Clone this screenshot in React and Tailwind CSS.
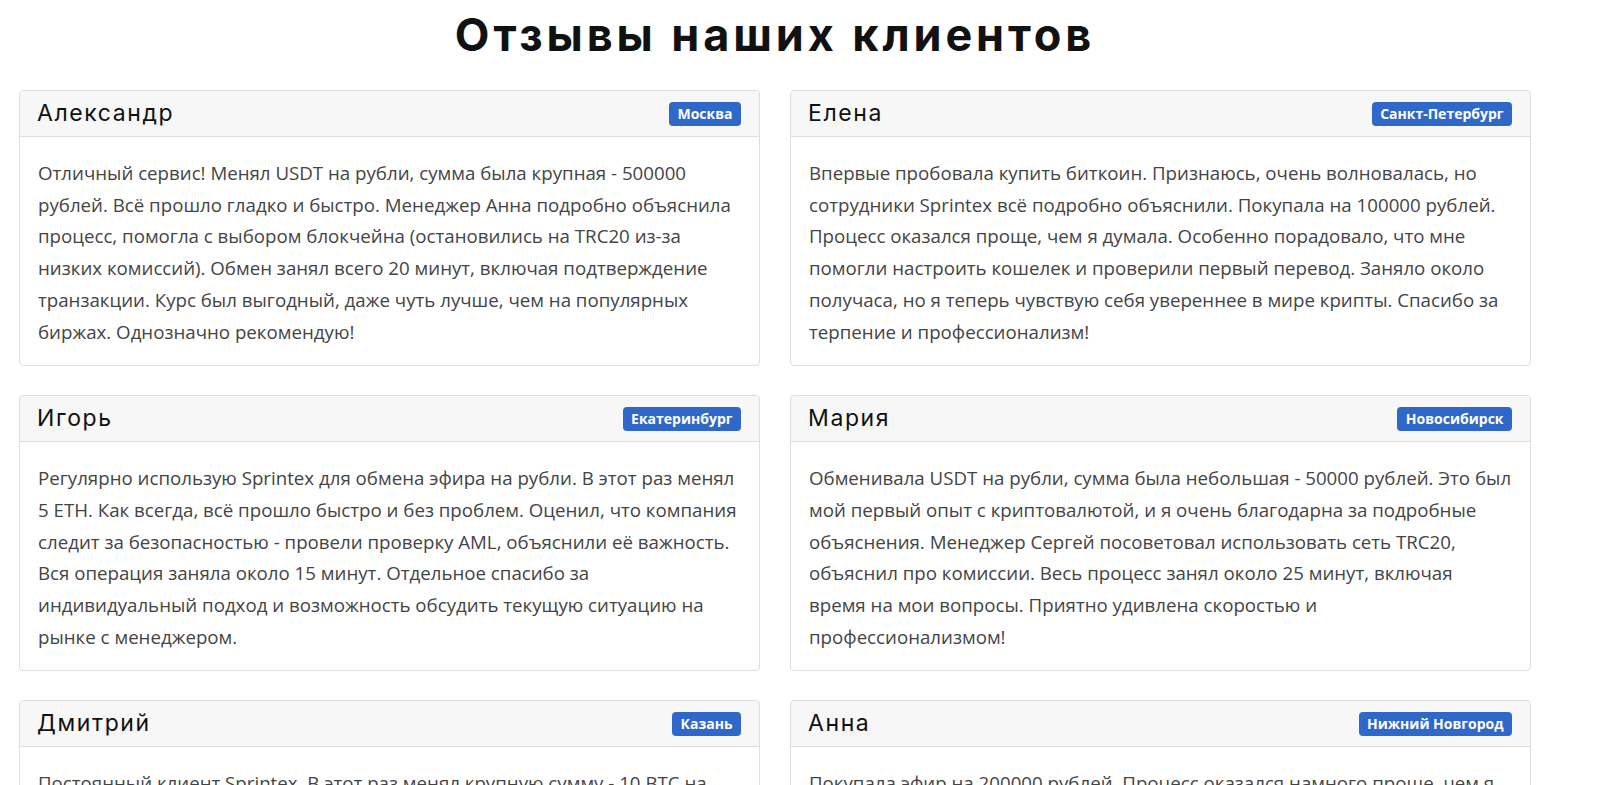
const reviews = [
  {
    name: "Александр",
    city: "Москва",
    text: "Отличный сервис! Менял USDT на рубли, сумма была крупная - 500000 рублей. Всё прошло гладко и быстро. Менеджер Анна подробно объяснила процесс, помогла с выбором блокчейна (остановились на TRC20 из-за низких комиссий). Обмен занял всего 20 минут, включая подтверждение транзакции. Курс был выгодный, даже чуть лучше, чем на популярных биржах. Однозначно рекомендую!",
  },
  {
    name: "Елена",
    city: "Санкт-Петербург",
    text: "Впервые пробовала купить биткоин. Признаюсь, очень волновалась, но сотрудники Sprintex всё подробно объяснили. Покупала на 100000 рублей. Процесс оказался проще, чем я думала. Особенно порадовало, что мне помогли настроить кошелек и проверили первый перевод. Заняло около получаса, но я теперь чувствую себя увереннее в мире крипты. Спасибо за терпение и профессионализм!",
  },
  {
    name: "Игорь",
    city: "Екатеринбург",
    text: "Регулярно использую Sprintex для обмена эфира на рубли. В этот раз менял 5 ETH. Как всегда, всё прошло быстро и без проблем. Оценил, что компания следит за безопасностью - провели проверку AML, объяснили её важность. Вся операция заняла около 15 минут. Отдельное спасибо за индивидуальный подход и возможность обсудить текущую ситуацию на рынке с менеджером.",
  },
  {
    name: "Мария",
    city: "Новосибирск",
    text: "Обменивала USDT на рубли, сумма была небольшая - 50000 рублей. Это был мой первый опыт с криптовалютой, и я очень благодарна за подробные объяснения. Менеджер Сергей посоветовал использовать сеть TRC20, объяснил про комиссии. Весь процесс занял около 25 минут, включая время на мои вопросы. Приятно удивлена скоростью и профессионализмом!",
  },
  {
    name: "Дмитрий",
    city: "Казань",
    text: "Постоянный клиент Sprintex. В этот раз менял крупную сумму - 10 BTC на рубли. Всё прошло чётко и по договорённости, курс зафиксировали заранее. Менеджер был на связи на каждом этапе сделки, средства поступили на счёт в течение часа. Рекомендую всем, кто ценит надёжность и своё время.",
  },
  {
    name: "Анна",
    city: "Нижний Новгород",
    text: "Покупала эфир на 200000 рублей. Процесс оказался намного проще, чем я ожидала. Менеджер помог выбрать удобный способ оплаты и всё подробно рассказал о безопасном хранении. Через 30 минут монеты уже были на моём кошельке. Обязательно обращусь ещё раз!",
  },
];

function ReviewCard({ name, city, text }) {
  return (
    <div className="rounded-[4px] border border-[#dedede] bg-white">
      <div className="flex h-[46px] items-center justify-between rounded-t-[4px] border-b border-[#dedede] bg-[#f7f7f7] pl-[17px] pr-[18px]">
        <h3 className="text-[23px] leading-none tracking-[1.6px] text-[#111]" style={{ fontFamily: "Inter, sans-serif" }}>
          {name}
        </h3>
        <span className="rounded-[4px] bg-[#2f68c8] px-[8.5px] py-[5px] text-[14px] font-bold leading-none text-white">
          {city}
        </span>
      </div>
      <div className="px-[18px] pt-[20px] pb-[18px]">
        <p className="text-[18.7px] leading-[31.7px] text-[#444]">{text}</p>
      </div>
    </div>
  );
}

export default function App() {
  return (
    <div className="min-h-screen bg-white" style={{ fontFamily: "'Open Sans', sans-serif" }}>
      <div className="w-[1531px] pl-[19px] pt-[10px]">
        <h2
          className="mb-[30px] text-center text-[45px] font-bold leading-[50px] tracking-[3.9px] text-[#111]"
          style={{ fontFamily: "Inter, sans-serif" }}
        >
          Отзывы наших клиентов
        </h2>
        <div className="grid grid-cols-2 gap-x-[30px] gap-y-[29px]">
          {reviews.map((r) => (
            <ReviewCard key={r.name} {...r} />
          ))}
        </div>
      </div>
    </div>
  );
}
